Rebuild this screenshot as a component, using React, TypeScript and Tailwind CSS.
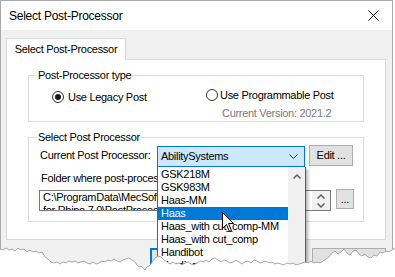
import React from "react";

const tornPts =
  "0,249 3,250 6,248 9,250 12,249 15,251 18,248 21,250 24,249 27,252 30,250 33,252 36,251 39,253 42,252 45,257 48,259 51,262 54,263 57,262 60,264 63,262 66,263 69,261 72,262 75,261 78,263 81,262 84,261 87,263 90,264 93,262 96,264 99,263 102,261 105,262 108,260 111,261 114,259 117,261 120,262 123,260 126,259 129,258 132,260 135,262 137,265 139,267 141,266 143,268 145,270 147,267 149,266 151,264 153,261 155,258 158,256 161,257 164,260 167,262 170,264 173,262 176,264 179,263 182,265 185,263 188,262 191,264 194,265 197,263 200,261 203,262 206,260 209,262 212,259 215,258 218,260 221,262 224,260 227,261 230,263 233,262 236,260 239,262 242,264 245,262 248,261 251,263 254,260 257,261 260,263 263,262 266,261 269,263 272,262 275,264 278,263 281,264 284,265 287,263 290,264 293,263 296,265 299,264 302,263 305,262 308,263 311,261 314,263 317,262 320,263 323,261 326,259 329,257 332,253 335,251 338,254 341,252 344,249 347,253 350,255 353,251 356,250 359,254 362,256 365,254 368,257 371,258 374,255 377,256 380,252 383,253 386,251 389,252 392,250 395,248";

function GroupBox({
  label,
  className,
  children,
}: {
  label: string;
  className: string;
  children?: React.ReactNode;
}) {
  return (
    <div className={`relative border border-[#dcdcdc] ${className}`}>
      <div className="absolute left-[8px] -top-[7px] bg-white px-[1px] leading-[13px]">
        {label}
      </div>
      {children}
    </div>
  );
}

const items = [
  "GSK218M",
  "GSK983M",
  "Haas-MM",
  "Haas",
  "Haas_with cut_comp-MM",
  "Haas_with cut_comp",
  "Handibot",
  "Hardinge",
];

export default function App() {
  return (
    <div className="relative w-[395px] h-[277px] overflow-hidden bg-white text-black font-['Liberation_Sans',Arial,sans-serif] text-[11px] tracking-[-0.3px]">
      <div className="w-[393px] h-full border border-b-0 border-[#aaaaaa] flex flex-col">
        {/* Title bar */}
        <div className="h-[29px] shrink-0 bg-white flex items-center justify-between pl-[8px] pr-[7px]">
          <span className="text-[12px] tracking-[-0.25px] leading-[14px]">Select Post-Processor</span>
          <svg width="11" height="11" viewBox="0 0 11 11" className="mr-[6px]">
            <path d="M0.5 0.5 L10.5 10.5 M10.5 0.5 L0.5 10.5" stroke="#000" strokeWidth="1" />
          </svg>
        </div>
        {/* Body */}
        <div className="flex-1 bg-[#f0f0f0] pl-[5px] pr-[6px] pt-[8px]">
          <div className="relative z-10 -mb-px w-[120px] h-[22px] bg-white border border-b-0 border-[#d9d9d9] flex items-center justify-center leading-[13px]">
            Select Post-Processor
          </div>
          <div className="w-[380px] h-[181px] bg-white border border-[#d9d9d9] pl-[21px] pt-[15px]">
            <GroupBox label="Post-Processor type" className="w-[336px] h-[47px]">
              <div className="flex pl-[23px]">
                <div className="w-[154px] mt-[15px] flex items-center h-[12px]">
                  <div className="w-[12px] h-[12px] rounded-full border border-[#333333] flex items-center justify-center">
                    <div className="w-[6px] h-[6px] rounded-full bg-[#1a1a1a]" />
                  </div>
                  <span className="ml-[4px] leading-[13px]">Use Legacy Post</span>
                </div>
                <div className="mt-[13px] flex flex-col">
                  <div className="h-[12px] flex items-center">
                    <div className="w-[12px] h-[12px] rounded-full border border-[#333333]" />
                    <span className="ml-[2px] leading-[13px]">Use Programmable Post</span>
                  </div>
                  <div className="mt-[6px] pl-[16px] leading-[13px] text-[#7a7a7a]">
                    Current Version: 2021.2
                  </div>
                </div>
              </div>
            </GroupBox>
            <GroupBox label="Select Post Processor" className="mt-[15px] w-[336px] h-[85px]">
              <div className="flex items-start pl-[11px] mt-[7px]">
                <div className="w-[117px] h-[21px] flex items-center leading-[13px]">
                  Current Post Processor:
                </div>
                <div className="mt-[1px] w-[148px] h-[21px] bg-[#cce8ff] border border-[#0078d7] flex items-center justify-between pl-[3px] pr-[6px]">
                  <span className="leading-[13px]">AbilitySystems</span>
                  <svg width="9" height="5" viewBox="0 0 9 5">
                    <path d="M0.5 0.5 L4.5 4.5 L8.5 0.5" stroke="#333" strokeWidth="1" fill="none" />
                  </svg>
                </div>
                <div className="ml-[4px] w-[44px] h-[21px] bg-[#e1e1e1] border border-[#adadad] flex items-center justify-center leading-[13px]">
                  Edit ...
                </div>
              </div>
              <div className="pl-[12px] mt-[5px] leading-[13px] whitespace-nowrap">
                Folder where post-processors are located:
              </div>
              <div className="flex items-start pl-[10px] mt-[4px]">
                <div className="mt-[1px] w-[292px] h-[21px] border border-[#7a7a7a] bg-white flex overflow-hidden">
                  <div className="flex-1 pl-[3px] overflow-hidden">
                    <div className="leading-[13px] whitespace-nowrap">
                      {"C:\\ProgramData\\MecSoft Corporation\\RhinoCAM 2022"}
                    </div>
                    <div className="leading-[13px] whitespace-nowrap">
                      {"for Rhino 7.0\\PostProcessors\\"}
                    </div>
                  </div>
                  <div className="w-[18px] h-full bg-[#f0f0f0] flex flex-col items-center justify-center gap-[4px]">
                    <svg width="8" height="5" viewBox="0 0 8 5">
                      <path d="M0.5 4.5 L4 1 L7.5 4.5" stroke="#606060" strokeWidth="1.5" fill="none" />
                    </svg>
                    <svg width="8" height="5" viewBox="0 0 8 5">
                      <path d="M0.5 0.5 L4 4 L7.5 0.5" stroke="#606060" strokeWidth="1.5" fill="none" />
                    </svg>
                  </div>
                </div>
                <div className="ml-[5px] w-[18px] h-[20px] bg-[#e1e1e1] border border-[#adadad] flex items-center justify-center leading-[13px]">
                  ...
                </div>
              </div>
            </GroupBox>
          </div>
          <div className="flex mt-[8px]">
            <div className="ml-[144px] w-[75px] h-[23px] bg-[#e1e1e1] border-2 border-[#0078d7]" />
            <div className="ml-[88px] w-[75px] h-[23px] bg-[#e1e1e1] border border-[#adadad] flex items-center justify-center">
              Cancel
            </div>
          </div>
        </div>
      </div>

      {/* Dropdown list */}
      <div className="absolute left-[157px] top-[167px] w-[149px] h-[110px] bg-white border-l border-r border-[#0078d7] flex shadow-[2px_2px_3px_rgba(0,0,0,0.3)]">
        <div className="w-[130px] pt-[1px]">
          {items.map((it) => (
            <div
              key={it}
              className={`h-[13px] leading-[13px] pl-[3px] whitespace-nowrap ${
                it === "Haas" ? "bg-[#0078d7] text-white" : ""
              }`}
            >
              {it}
            </div>
          ))}
        </div>
        <div className="w-[17px] bg-[#f0f0f0] flex flex-col items-center pt-[7px]">
          <svg width="8" height="5" viewBox="0 0 8 5">
            <path d="M0.5 4.5 L4 1 L7.5 4.5" stroke="#606060" strokeWidth="1.5" fill="none" />
          </svg>
        </div>
      </div>

      {/* Mouse cursor */}
      <svg className="absolute left-[222px] top-[212px]" width="13" height="21" viewBox="0 0 13 21">
        <path
          d="M0.5 0.5 L0.5 16.5 L4.5 12.5 L7.5 19.5 L9.5 18.5 L6.5 11.5 L11.5 11.5 Z"
          fill="#ffffff"
          stroke="#000000"
          strokeWidth="1"
          strokeLinejoin="round"
        />
      </svg>

      {/* Torn edge */}
      <svg className="absolute left-0 top-0 pointer-events-none" width="395" height="277" viewBox="0 0 395 277">
        <polygon points={`${tornPts} 395,277 0,277`} fill="#ffffff" />
        <polyline points={tornPts} fill="none" stroke="#a8a8a8" strokeWidth="1" />
      </svg>
    </div>
  );
}
